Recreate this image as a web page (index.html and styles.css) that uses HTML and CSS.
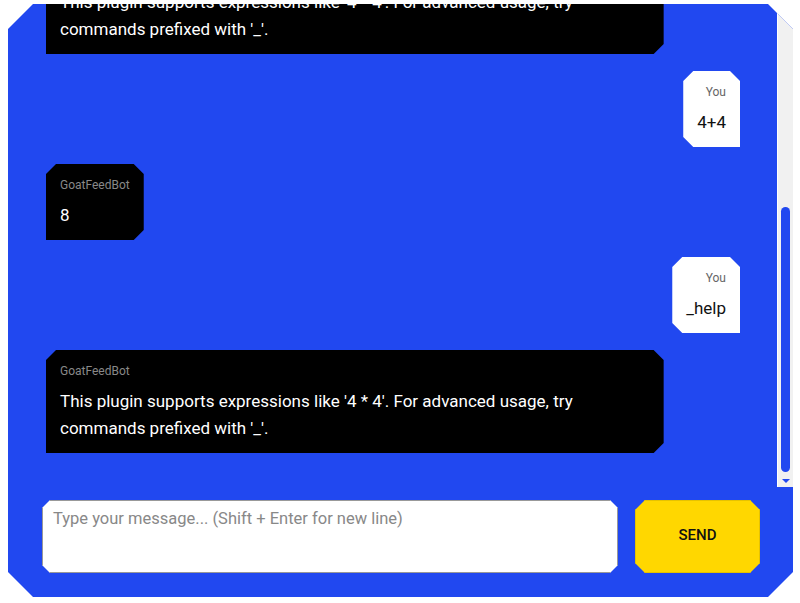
FILE: index.html
```html
<!DOCTYPE html>
<html lang="en">
<head>
  <meta charset="UTF-8">
  <meta name="viewport" content="width=device-width, initial-scale=1.0">
  <title>GoatFeedBot Chat</title>
  <link rel="stylesheet" href="styles.css">
</head>
<body>
  <div class="chat-container">
    <div class="chat-body">
      <div class="messages" id="messages">
        <div class="message user">
          <div class="sender">You</div>
          <div class="text">hello</div>
        </div>
        <div class="message bot">
          <div class="sender">GoatFeedBot</div>
          <div class="text">Hi! Send me a math expression or type '_help'.</div>
        </div>
        <div class="message user">
          <div class="sender">You</div>
          <div class="text">_help</div>
        </div>
        <div class="message bot">
          <div class="sender">GoatFeedBot</div>
          <div class="text">This plugin supports expressions like '4 * 4'. For advanced usage, try commands prefixed with '_'.</div>
        </div>
        <div class="message user">
          <div class="sender">You</div>
          <div class="text">4+4</div>
        </div>
        <div class="message bot">
          <div class="sender">GoatFeedBot</div>
          <div class="text">8</div>
        </div>
        <div class="message user">
          <div class="sender">You</div>
          <div class="text">_help</div>
        </div>
        <div class="message bot">
          <div class="sender">GoatFeedBot</div>
          <div class="text">This plugin supports expressions like '4 * 4'. For advanced usage, try commands prefixed with '_'.</div>
        </div>
      </div>
      <div class="scroll-track">
        <div class="scroll-btn up"></div>
        <div class="scroll-rail" id="rail">
          <div class="scroll-thumb" id="thumb"></div>
        </div>
        <div class="scroll-btn down"></div>
      </div>
    </div>
    <form class="input-area" id="chat-form">
      <textarea id="message-input" placeholder="Type your message... (Shift + Enter for new line)" autofocus></textarea>
      <button type="submit">SEND</button>
    </form>
  </div>

  <script>
    document.addEventListener('DOMContentLoaded', () => {
      const messages = document.getElementById('messages');
      const rail = document.getElementById('rail');
      const thumb = document.getElementById('thumb');
      const form = document.getElementById('chat-form');
      const input = document.getElementById('message-input');

      function updateThumb() {
        const railHeight = rail.clientHeight;
        const size = railHeight * messages.clientHeight / messages.scrollHeight;
        const offset = (railHeight - size) * messages.scrollTop /
          Math.max(1, messages.scrollHeight - messages.clientHeight);
        thumb.style.height = size + 'px';
        thumb.style.marginTop = offset + 'px';
      }

      // keep the newest message in view
      messages.scrollTop = messages.scrollHeight;
      updateThumb();
      messages.addEventListener('scroll', updateThumb);

      input.addEventListener('keydown', (e) => {
        if (e.key === 'Enter' && !e.shiftKey) {
          e.preventDefault();
          form.requestSubmit();
        }
      });

      form.addEventListener('submit', (e) => {
        e.preventDefault();
        const text = input.value.trim();
        if (!text) return;

        const msg = document.createElement('div');
        msg.className = 'message user';
        msg.innerHTML = '<div class="sender">You</div><div class="text"></div>';
        msg.querySelector('.text').textContent = text;
        messages.appendChild(msg);

        input.value = '';
        messages.scrollTop = messages.scrollHeight;
        updateThumb();
      });
    });
  </script>
</body>
</html>
```

FILE: styles.css
```css
body {
  font-family: Roboto, "Liberation Sans", sans-serif;
  background-color: white;
  margin: 0;
}

.chat-container {
  background-color: #2148f0;
  margin: 4px 7px 0 8px;
  height: 593px;
  display: flex;
  flex-direction: column;
  clip-path: polygon(25px 0, calc(100% - 25px) 0, 100% 25px, 100% calc(100% - 25px),
    calc(100% - 25px) 100%, 25px 100%, 0 calc(100% - 25px), 0 25px);
}

.chat-body {
  flex: 1;
  min-height: 0;
  display: flex;
}

.messages {
  flex: 1;
  overflow-y: auto;
  scrollbar-width: none;
  padding: 17px 37px 34px 38px;
  display: flex;
  flex-direction: column;
  gap: 17px;
}

/* scrollbar */
.scroll-track {
  width: 15px;
  background-color: #f1f1f1;
  border-left: 1px solid #fff;
  display: flex;
  flex-direction: column;
}

.scroll-btn {
  height: 15px;
  display: flex;
  align-items: center;
  justify-content: center;
}

.scroll-btn::before {
  content: "";
  border-left: 4px solid transparent;
  border-right: 4px solid transparent;
}

.scroll-btn.up::before {
  border-bottom: 4px solid #2148f0;
}

.scroll-btn.down::before {
  border-top: 4px solid #2148f0;
}

.scroll-rail {
  flex: 1;
  padding-bottom: 4px;
}

.scroll-thumb {
  width: 9px;
  margin-left: 3px;
  background-color: #2148f0;
  border-radius: 5px;
}

.message {
  max-width: 89%;
  padding: 12px 14px 11px;
  box-sizing: border-box;
}

.message .sender {
  font-size: 12px;
  line-height: 18px;
  margin-bottom: 8px;
}

.message .text {
  font-size: 17px;
  line-height: 27px;
}

.bot {
  align-self: flex-start;
  background-color: black;
  color: white;
  clip-path: polygon(10px 0, calc(100% - 10px) 0, 100% 10px, 100% calc(100% - 10px),
    calc(100% - 10px) 100%, 0 100%, 0 10px);
}

.bot .sender {
  color: #888;
}

.user {
  align-self: flex-end;
  background-color: white;
  color: #111;
  text-align: right;
  clip-path: polygon(10px 0, calc(100% - 10px) 0, 100% 10px, 100% 100%,
    10px 100%, 0 calc(100% - 10px), 0 10px);
}

.user .sender {
  color: #666;
}

.input-area {
  display: flex;
  gap: 17px;
  padding: 13px 33px 24px 34px;
}

textarea {
  flex: 1;
  height: 73px;
  box-sizing: border-box;
  padding: 8px 10px;
  border: 1px solid #999;
  font-family: inherit;
  font-size: 16.5px;
  resize: none;
  outline: none;
  clip-path: polygon(8px 0, calc(100% - 8px) 0, 100% 8px, 100% calc(100% - 8px),
    calc(100% - 8px) 100%, 8px 100%, 0 calc(100% - 8px), 0 8px);
}

textarea::placeholder {
  color: #888;
}

button {
  width: 125px;
  height: 73px;
  padding: 0 0 4px;
  background-color: #ffd700;
  color: #111;
  border: 1px solid #e6c200;
  font-family: inherit;
  font-size: 15px;
  font-weight: 500;
  cursor: pointer;
  clip-path: polygon(10px 0, calc(100% - 10px) 0, 100% 10px, 100% calc(100% - 10px),
    calc(100% - 10px) 100%, 10px 100%, 0 calc(100% - 10px), 0 10px);
}

button:hover {
  background-color: #f0c800;
}
```
